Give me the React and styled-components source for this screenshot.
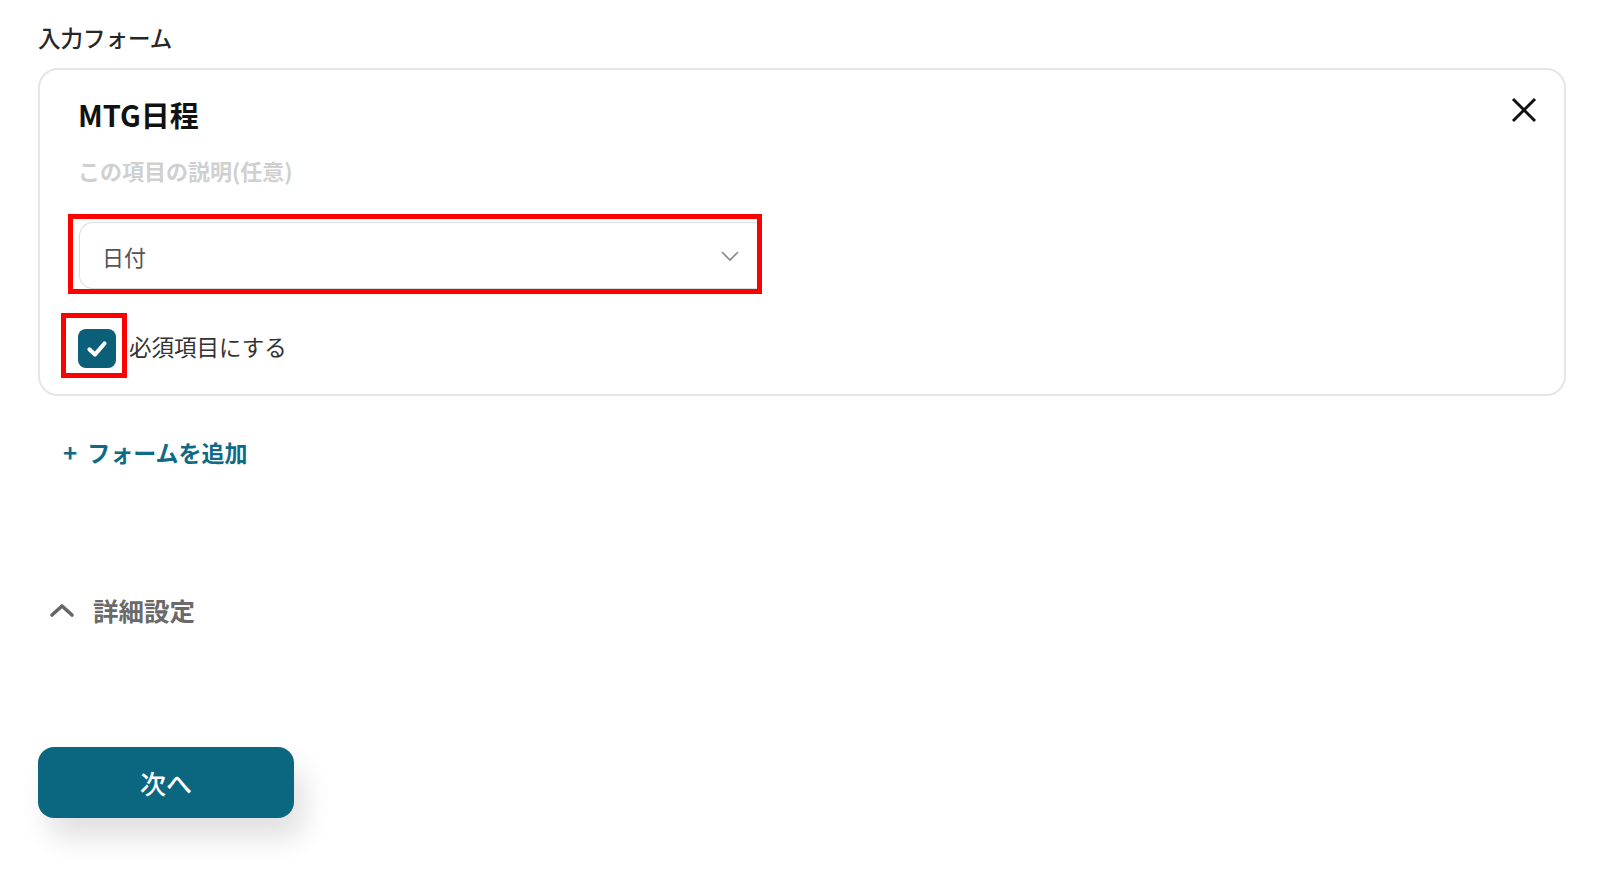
import styled, { createGlobalStyle } from "styled-components";

const GlobalStyle = createGlobalStyle`
  body {
    margin: 0;
    background: #ffffff;
    font-family: "Noto Sans CJK JP", "Noto Sans", sans-serif;
    color: #222;
  }
`;

const Page = styled.div`
  padding: 21px 34px 40px 38px;
`;

const SectionTitle = styled.h2`
  margin: 0;
  font-size: 22.5px;
  line-height: 32px;
  font-weight: 500;
  color: #262626;
`;

const Card = styled.div`
  position: relative;
  margin-top: 15px;
  border: 2px solid #e3e6eb;
  border-radius: 20px;
  padding: 24px 38px 16px 38px;
`;

const FieldName = styled.div`
  font-size: 29px;
  line-height: 40px;
  font-weight: 700;
  color: #111;
`;

const FieldDesc = styled.div`
  margin-top: 20px;
  font-size: 22px;
  line-height: 32px;
  font-weight: 700;
  color: #d0d0d0;
`;

const CloseButton = styled.button`
  position: absolute;
  top: 26px;
  right: 26px;
  width: 28px;
  height: 28px;
  padding: 0;
  border: none;
  background: none;
  display: flex;
  align-items: center;
  justify-content: center;
  cursor: pointer;
`;

const Highlight = styled.div`
  box-sizing: border-box;
  border: 5px solid #ff0000;
  margin-left: ${(p) => p.$shift}px;
  width: ${(p) => p.$w}px;
  height: ${(p) => p.$h}px;
  padding: ${(p) => p.$pad};
`;

const SelectBlock = styled.div`
  margin-top: 28px;
`;

const Select = styled.div`
  box-sizing: border-box;
  width: 100%;
  height: 67px;
  border: 1px solid #d7dce2;
  border-right: none;
  border-radius: 14px 0 0 14px;
  display: flex;
  align-items: center;
  justify-content: space-between;
  padding: 0 17px 0 22px;
  font-size: 22px;
  color: #555;
`;

const CheckRow = styled.div`
  margin-top: 19px;
  display: flex;
  align-items: center;
`;

const CheckBox = styled.div`
  width: 38px;
  height: 39px;
  border-radius: 8px;
  background: #0b5f78;
  display: flex;
  align-items: center;
  justify-content: center;
`;

const CheckLabel = styled.span`
  margin-left: 2px;
  font-size: 22.5px;
  line-height: 32px;
  color: #333;
`;

const AddLink = styled.div`
  margin: 40px 0 0 25px;
  font-size: 23px;
  line-height: 32px;
  font-weight: 700;
  color: #0e6a85;
  display: flex;
  align-items: center;
  gap: 10px;
`;

const Plus = styled.span`
  font-size: 24px;
  font-weight: 700;
`;

const Details = styled.div`
  margin: 124px 0 0 11px;
  display: flex;
  align-items: center;
  gap: 18px;
  font-size: 25.5px;
  line-height: 36px;
  font-weight: 700;
  color: #6a6a6a;
`;

const NextButton = styled.button`
  margin-top: 119px;
  width: 256px;
  height: 71px;
  border: none;
  border-radius: 16px;
  background: #0b6680;
  color: #fff;
  font-family: inherit;
  font-size: 26px;
  font-weight: 500;
  box-shadow: 10px 20px 28px rgba(0, 0, 0, 0.12);
  cursor: pointer;
`;

export default function App() {
  return (
    <>
      <GlobalStyle />
      <Page>
        <SectionTitle>入力フォーム</SectionTitle>
        <Card>
          <FieldName>MTG日程</FieldName>
          <FieldDesc>この項目の説明(任意)</FieldDesc>
          <CloseButton aria-label="close">
            <svg width="26" height="26" viewBox="0 0 26 26">
              <path d="M2 2 L24 24 M24 2 L2 24" stroke="#111" strokeWidth="3" />
            </svg>
          </CloseButton>
          <SelectBlock>
            <Highlight $shift={-10} $w={694} $h={80} $pad="3px 0 0 6px">
              <Select>
                <span>日付</span>
                <svg width="20" height="12" viewBox="0 0 20 12">
                  <path d="M2 2 L10 10 L18 2" fill="none" stroke="#888" strokeWidth="1.6" />
                </svg>
              </Select>
            </Highlight>
          </SelectBlock>
          <CheckRow>
            <Highlight $shift={-17} $w={66} $h={65} $pad="11px 0 0 12px">
              <CheckBox>
                <svg width="22" height="18" viewBox="0 0 22 18">
                  <path
                    d="M3.5 9.5 L9 14.5 L18.5 3.5"
                    fill="none"
                    stroke="#fff"
                    strokeWidth="4.2"
                    strokeLinecap="round"
                    strokeLinejoin="round"
                  />
                </svg>
              </CheckBox>
            </Highlight>
            <CheckLabel>必須項目にする</CheckLabel>
          </CheckRow>
        </Card>
        <AddLink>
          <Plus>+</Plus>
          <span>フォームを追加</span>
        </AddLink>
        <Details>
          <svg width="26" height="16" viewBox="0 0 26 16">
            <path
              d="M3 13 L13 4 L23 13"
              fill="none"
              stroke="#666"
              strokeWidth="3.6"
              strokeLinecap="round"
              strokeLinejoin="round"
            />
          </svg>
          <span>詳細設定</span>
        </Details>
        <NextButton>次へ</NextButton>
      </Page>
    </>
  );
}
